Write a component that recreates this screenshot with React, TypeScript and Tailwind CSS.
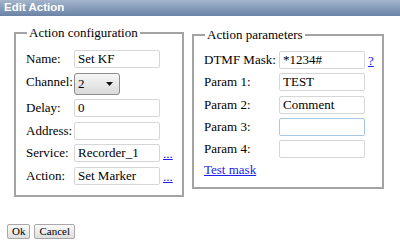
const serif = "font-['Liberation_Serif','Times_New_Roman',serif]";

function TextBox({ value = "", focus = false }: { value?: string; focus?: boolean }) {
  return (
    <div
      className={`h-[18px] w-[86px] rounded-[2px] border bg-white px-[3px] text-[13px] leading-[16px] text-black ${
        focus ? "border-[#a7c8e8]" : "border-[#d6d6d6]"
      }`}
    >
      {value}
    </div>
  );
}

function Label({ children }: { children: React.ReactNode }) {
  return <div className="text-[13px] leading-[16px] text-black pt-[1px]">{children}</div>;
}

function Dots() {
  return <a className="ml-[3px] text-[13px] leading-[16px] text-[#2020ee] underline">...</a>;
}

function ChannelSelect() {
  return (
    <div className="flex h-[22px] w-[46px] items-center justify-between rounded-[3px] border border-[#8c8c8c] bg-gradient-to-b from-[#f6f6f6] to-[#dadada] pl-[3px] pr-[6px] text-[13px]">
      <span>2</span>
      <svg width="7" height="4" viewBox="0 0 7 4">
        <path d="M0 0h7L3.5 4z" fill="#111" />
      </svg>
    </div>
  );
}

export default function App() {
  return (
    <div className={`h-[244px] w-[400px] overflow-hidden bg-white ${serif}`}>
      <div className="h-[16px] bg-gradient-to-b from-[#a4b5cc] to-[#6a83a6] pl-[4px] font-['Liberation_Sans',Arial,sans-serif] text-[11.5px] font-bold leading-[15px] text-white">
        Edit Action
      </div>

      <div className="ml-[14px] mt-[9px] flex items-start gap-[8px]">
        <fieldset className="w-[170px] border-2 border-[#a3a3a3] pb-[10px] pl-[10px] pt-[9px]">
          <legend className="ml-[1px] px-[2px] text-[13px] leading-[16px]">Action configuration</legend>
          <div className="grid grid-cols-[48px_auto] items-start gap-y-[4.5px]">
            <Label>Name:</Label>
            <TextBox value="Set KF" />
            <Label>Channel:</Label>
            <ChannelSelect />
            <Label>Delay:</Label>
            <TextBox value="0" />
            <Label>Address:</Label>
            <TextBox />
            <Label>Service:</Label>
            <div className="flex items-end">
              <TextBox value="Recorder_1" />
              <Dots />
            </div>
            <Label>Action:</Label>
            <div className="flex items-end">
              <TextBox value="Set Marker" />
              <Dots />
            </div>
          </div>
        </fieldset>

        <fieldset className="mt-[2px] w-[192px] border-2 border-[#a3a3a3] pb-[9px] pl-[10px] pt-[8px]">
          <legend className="ml-[1px] px-[2px] text-[13px] leading-[16px]">Action parameters</legend>
          <div className="grid grid-cols-[75px_auto] items-start gap-y-[4.25px]">
            <Label>DTMF Mask:</Label>
            <div className="flex items-end">
              <TextBox value="*1234#" />
              <a className="ml-[3px] text-[13px] leading-[16px] text-[#2020ee] underline">?</a>
            </div>
            <Label>Param 1:</Label>
            <TextBox value="TEST" />
            <Label>Param 2:</Label>
            <TextBox value="Comment" />
            <Label>Param 3:</Label>
            <TextBox focus />
            <Label>Param 4:</Label>
            <TextBox />
          </div>
          <a className="mt-[4px] block text-[13px] leading-[16px] text-[#2020ee] underline">Test mask</a>
        </fieldset>
      </div>

      <div className="ml-[7px] mt-[27px] flex gap-[4px]">
        <button className="h-[15px] rounded-[2px] border border-[#a8a8a8] bg-gradient-to-b from-[#fafafa] to-[#dedede] px-[4px] text-[11px] leading-[13px]">
          Ok
        </button>
        <button className="h-[15px] rounded-[2px] border border-[#a8a8a8] bg-gradient-to-b from-[#fafafa] to-[#dedede] px-[4px] text-[11px] leading-[13px]">
          Cancel
        </button>
      </div>
    </div>
  );
}
